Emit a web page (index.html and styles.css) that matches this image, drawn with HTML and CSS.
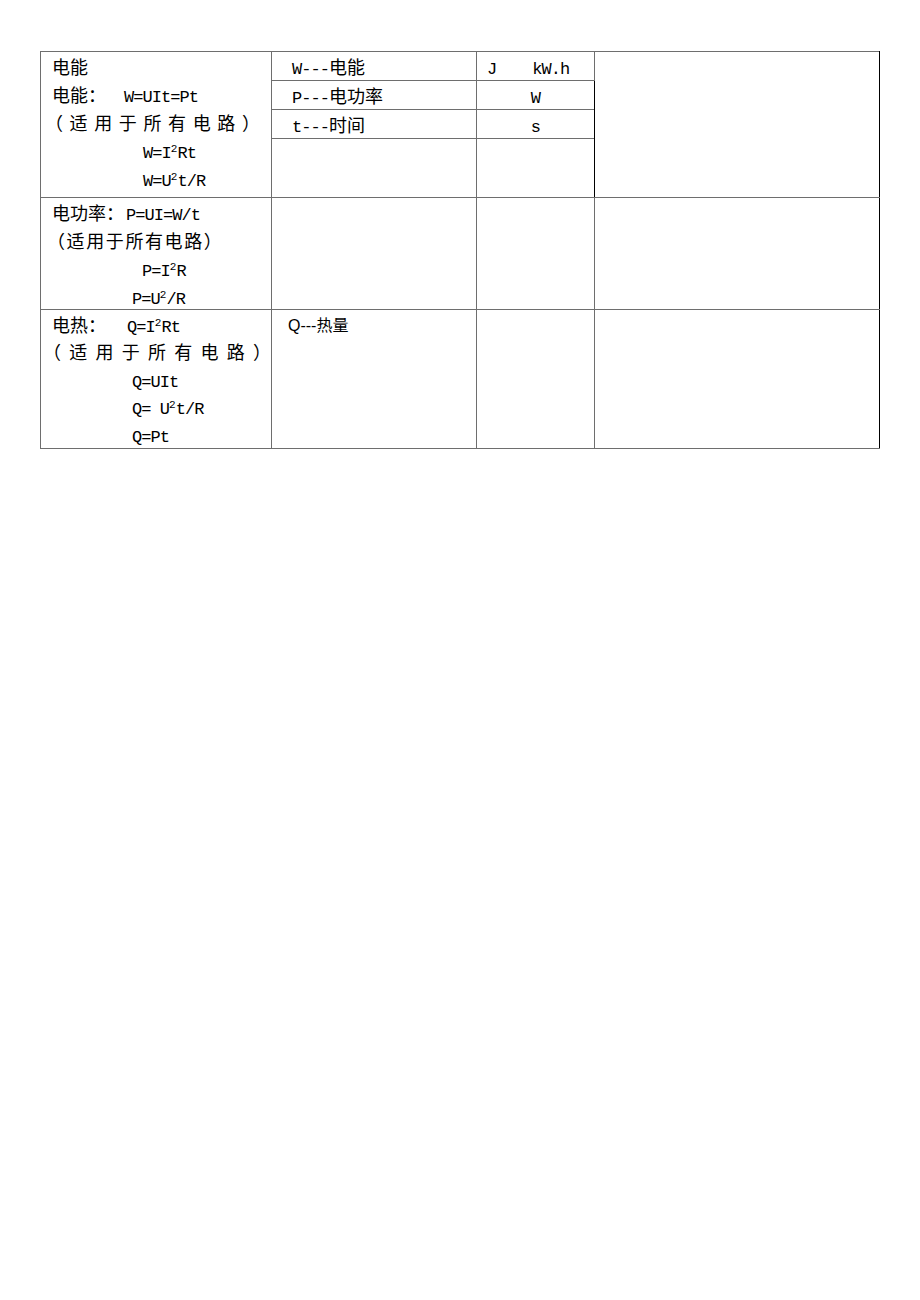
FILE: index.html
```html
<!DOCTYPE html>
<html lang="zh-CN">
<head>
<meta charset="utf-8">
<title>电能 电功率 电热</title>
<link rel="stylesheet" href="styles.css">
</head>
<body>
<table class="sheet">
  <colgroup>
    <col class="w1"><col class="w2"><col class="w3"><col class="w4">
  </colgroup>
  <tr>
    <td rowspan="4" class="formula">
      <div class="box b1">
        <div class="ln">电能</div>
        <div class="ln">电能：<span class="gap g1"></span><span class="lat">W=UIt=Pt</span></div>
        <div class="ln just j1">（适用于所有电路）</div>
        <div class="ln ind143"><span class="lat">W=I<sup>2</sup>Rt</span></div>
        <div class="ln ind143"><span class="lat">W=U<sup>2</sup>t/R</span></div>
      </div>
    </td>
    <td class="sym"><div class="cell"><span class="lat">W---</span>电能</div></td>
    <td class="unit"><div class="cell"><span class="lat">J</span><span class="lat kwh">kW.h</span></div></td>
    <td rowspan="4" class="note"></td>
  </tr>
  <tr>
    <td class="sym"><div class="cell"><span class="lat">P---</span>电功率</div></td>
    <td class="unit centered"><div class="cell"><span class="lat">W</span></div></td>
  </tr>
  <tr>
    <td class="sym"><div class="cell"><span class="lat">t---</span>时间</div></td>
    <td class="unit centered"><div class="cell"><span class="lat">s</span></div></td>
  </tr>
  <tr>
    <td class="sym"><div class="cell tall"></div></td>
    <td class="unit"><div class="cell tall"></div></td>
  </tr>
  <tr>
    <td class="formula">
      <div class="box b2">
        <div class="ln">电功率：<span class="gap g2"></span><span class="lat">P=UI=W/t</span></div>
        <div class="ln plain">（适用于所有电路）</div>
        <div class="ln ind142"><span class="lat">P=I<sup>2</sup>R</span></div>
        <div class="ln ind132"><span class="lat">P=U<sup>2</sup>/R</span></div>
      </div>
    </td>
    <td></td>
    <td></td>
    <td class="note"></td>
  </tr>
  <tr>
    <td class="formula">
      <div class="box b3">
        <div class="ln">电热：<span class="gap g3"></span><span class="lat">Q=I<sup>2</sup>Rt</span></div>
        <div class="ln just j3">（适用于所有电路）</div>
        <div class="ln ind132"><span class="lat">Q=UIt</span></div>
        <div class="ln ind132"><span class="lat">Q= U<sup>2</sup>t/R</span></div>
        <div class="ln ind132"><span class="lat">Q=Pt</span></div>
      </div>
    </td>
    <td class="sym heat"><div class="cell">Q---热量</div></td>
    <td></td>
    <td class="note"></td>
  </tr>
</table>
</body>
</html>
```

FILE: styles.css
```css
html, body {
  margin: 0;
  padding: 0;
  background: #ffffff;
}

body {
  font-family: "Noto Sans CJK SC", "Noto Sans", sans-serif;
  font-size: 18px;
  color: #000000;
}

.sheet {
  margin: 51px 0 0 40px;
  width: 839px;
  table-layout: fixed;
  border-collapse: collapse;
}

.w1 { width: 231px; }
.w2 { width: 205px; }
.w3 { width: 118px; }
.w4 { width: 285px; }

.sheet td {
  border: 1px solid #6e6e6e;
  padding: 0;
  vertical-align: top;
  line-height: 20px;
}

.sheet td.note {
  border-left-color: #000000;
  border-right-color: #000000;
}

/* fixed-height content boxes decide the row heights */
.box {
  padding: 0 0 0 11px;
  overflow: visible;
}

.b1 { height: 145px; }
.b2 { height: 111px; }
.b3 { height: 137px; }

.ln {
  height: 28px;
  line-height: 28px;
  white-space: nowrap;
}

.b3 .ln { height: 27.4px; line-height: 27.4px; }

.b3 .ln:first-child { margin-top: 1px; }

.cell {
  height: 28px;
  line-height: 28px;
  white-space: nowrap;
  overflow: visible;
}

.cell.tall { height: 58px; }

.lat {
  font-family: "Liberation Mono", "DejaVu Sans Mono", monospace;
  font-size: 17px;
  letter-spacing: -0.95px;
}

.lat sup {
  font-size: 11px;
  line-height: 0;
  vertical-align: 6px;
  letter-spacing: 0;
}

.gap {
  display: inline-block;
}

.g1 { width: 18px; }
.g2 { width: 2px; }
.g3 { width: 21px; }

.just {
  text-align: justify;
  text-align-last: justify;
}

.j1 { width: 215px; margin-left: -7px; }
.j3 { width: 228px; margin-left: -9px; }

.plain {
  letter-spacing: 1.6px;
  margin-left: -5px;
}

.ind143 { padding-left: 91px; }
.ind142 { padding-left: 90px; }
.ind132 { padding-left: 80px; }

.sym .cell {
  padding-left: 20px;
}

.heat .cell {
  padding-left: 16px;
  font-family: "Liberation Sans", "Noto Sans CJK SC", sans-serif;
  font-size: 16px;
  margin-top: 2px;
}

.unit .cell {
  padding-left: 10px;
}

.unit .kwh {
  margin-left: 36px;
}

.unit.centered .cell {
  padding-left: 0;
  text-align: center;
}
```
